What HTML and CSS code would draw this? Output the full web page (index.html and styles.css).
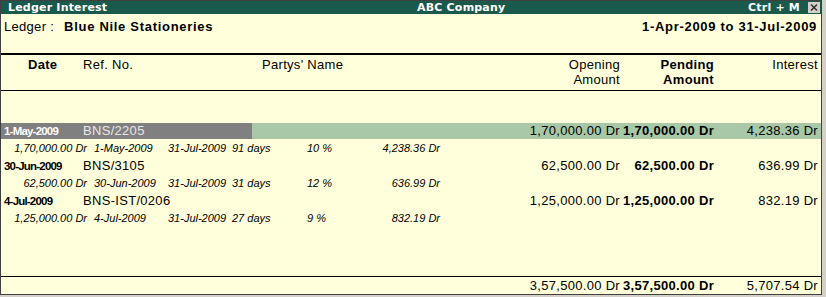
FILE: index.html
```html
<!DOCTYPE html>
<html>
<head>
<meta charset="utf-8">
<link rel="stylesheet" href="styles.css">
</head>
<body>
<div class="window">
  <div class="titlebar">
    <span class="title">Ledger Interest</span>
    <span class="company">ABC Company</span>
    <span class="shortcut">Ctrl + M</span>
    <span class="close"><svg width="12" height="11" viewBox="0 0 12 11"><path d="M3 2.5 L9 8.5 M9 2.5 L3 8.5" stroke="#333" stroke-width="1.6"/></svg></span>
  </div>
  <div class="info">
    <div><span class="label">Ledger :</span><span class="ledger-name">Blue Nile Stationeries</span></div>
    <div class="period">1-Apr-2009 to 31-Jul-2009</div>
  </div>
  <div class="head cols">
    <div class="c-date bold">Date</div>
    <div class="c-ref">Ref. No.</div>
    <div class="c-party">Partys' Name</div>
    <div class="num">Opening<br>Amount</div>
    <div class="num bold">Pending<br>Amount</div>
    <div class="num">Interest</div>
  </div>
  <div class="list">
    <div class="bill cols sel">
      <div class="c-date">1-May-2009</div>
      <div class="c-ref">BNS/2205</div>
      <div></div>
      <div class="num">1,70,000.00 Dr</div>
      <div class="num bold">1,70,000.00 Dr</div>
      <div class="num">4,238.36 Dr</div>
    </div>
    <div class="detail">
      <div class="d-amt">1,70,000.00 Dr</div>
      <div class="d-from">1-May-2009</div>
      <div>31-Jul-2009</div>
      <div>91 days</div>
      <div>10 %</div>
      <div class="d-int">4,238.36 Dr</div>
    </div>
    <div class="bill cols">
      <div class="c-date">30-Jun-2009</div>
      <div class="c-ref">BNS/3105</div>
      <div></div>
      <div class="num">62,500.00 Dr</div>
      <div class="num bold">62,500.00 Dr</div>
      <div class="num">636.99 Dr</div>
    </div>
    <div class="detail">
      <div class="d-amt">62,500.00 Dr</div>
      <div class="d-from">30-Jun-2009</div>
      <div>31-Jul-2009</div>
      <div>31 days</div>
      <div>12 %</div>
      <div class="d-int">636.99 Dr</div>
    </div>
    <div class="bill cols">
      <div class="c-date">4-Jul-2009</div>
      <div class="c-ref">BNS-IST/0206</div>
      <div></div>
      <div class="num">1,25,000.00 Dr</div>
      <div class="num bold">1,25,000.00 Dr</div>
      <div class="num">832.19 Dr</div>
    </div>
    <div class="detail">
      <div class="d-amt">1,25,000.00 Dr</div>
      <div class="d-from">4-Jul-2009</div>
      <div>31-Jul-2009</div>
      <div>27 days</div>
      <div>9 %</div>
      <div class="d-int">832.19 Dr</div>
    </div>
  </div>
  <div class="totals cols">
    <div></div>
    <div></div>
    <div></div>
    <div class="num">3,57,500.00 Dr</div>
    <div class="num bold">3,57,500.00 Dr</div>
    <div class="num">5,707.54 Dr</div>
  </div>
</div>
</body>
</html>
```
FILE: styles.css
```css
html, body {
  margin: 0;
  padding: 0;
  background: #d4d0c8;
}
body {
  font-family: "Liberation Sans", Arial, sans-serif;
  font-size: 13px;
  letter-spacing: 0.3px;
  color: #000;
}
.window {
  width: 820px;
  height: 293px;
  border: 1px solid #404040;
  background: #ffffdc;
  display: flex;
  flex-direction: column;
}
.titlebar {
  height: 13px;
  background: #1a5a4c;
  color: #fff;
  display: flex;
  align-items: center;
  font: bold 11px "DejaVu Sans", sans-serif;
  letter-spacing: 0.2px;
  line-height: 13px;
}
.title {
  width: 409px;
  padding-left: 7px;
}
.company {
  flex: 1;
}
.shortcut {
  margin-right: 8px;
}
.close {
  width: 12px;
  height: 11px;
  background: #d4d0c8;
  margin-right: 1px;
  display: flex;
}
.info {
  height: 39px;
  box-sizing: border-box;
  padding: 5px 4px 0 3px;
  display: flex;
  justify-content: space-between;
  line-height: 15px;
}
.label {
  margin-right: 10px;
}
.ledger-name, .period {
  font-weight: bold;
  letter-spacing: 0.7px;
}
.cols {
  display: grid;
  grid-template-columns: 82px 179px 258px 100px 94px 104px 3px;
}
.head {
  border-top: 2px solid #000;
  border-bottom: 1px solid #000;
  height: 33px;
  box-sizing: content-box;
  padding-top: 2px;
  line-height: 15px;
}
.head .c-date {
  padding-left: 27px;
}
.bold {
  font-weight: bold;
}
.num {
  text-align: right;
  white-space: nowrap;
}
.list {
  flex: 1;
  padding-top: 32px;
}
.bill {
  height: 16px;
  line-height: 16px;
}
.bill .c-date {
  padding-left: 3px;
  font-weight: bold;
  font-size: 11.5px;
  letter-spacing: -0.8px;
}
.sel {
  background: linear-gradient(to right, #808080 251px, #a8c8a8 251px);
}
.sel .c-date {
  color: #fff;
}
.sel .c-ref {
  color: #e8e8e8;
}
.detail {
  display: grid;
  grid-template-columns: 86px 81px 64px 75px 60px 73px;
  height: 19px;
  line-height: 19px;
  font-style: italic;
  font-size: 11px;
  letter-spacing: 0;
  white-space: nowrap;
}
.d-amt {
  text-align: right;
}
.d-from {
  padding-left: 7px;
}
.d-int {
  text-align: right;
}
.totals {
  border-top: 1px solid #000;
  height: 17px;
  line-height: 17px;
}
```
